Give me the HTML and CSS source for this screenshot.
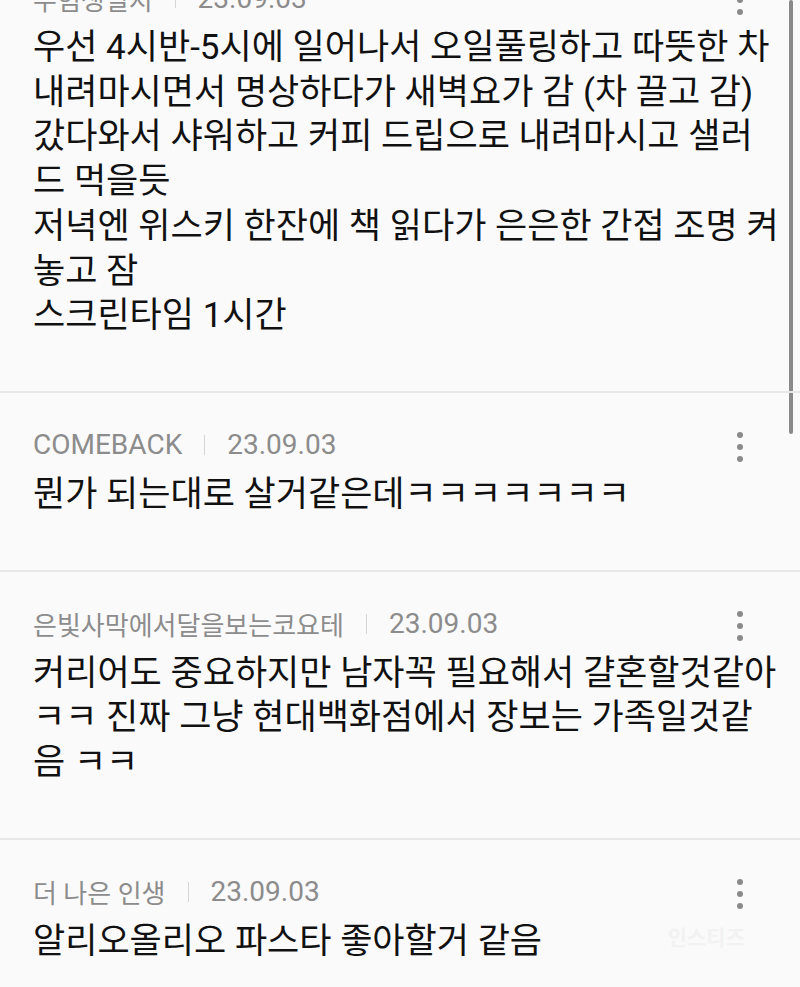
FILE: index.html
```html
<!DOCTYPE html>
<html lang="ko">
<head>
  <meta charset="UTF-8" />
  <meta name="viewport" content="width=device-width, initial-scale=1" />
  <title>댓글</title>
  <link rel="stylesheet" href="styles.css">
</head>
<body>

  <div class="scrollbar"></div>

  <ul class="comments">
    <li class="comment first">
      <div class="meta">
        <span class="name ko">수험생일지</span>
        <span class="sep"></span>
        <span class="date">23.09.03</span>
        <span class="more"><i></i><i></i><i></i></span>
      </div>
      <p class="body">우선 4시반-5시에 일어나서 오일풀링하고 따뜻한 차<br>내려마시면서 명상하다가 새벽요가 감 (차 끌고 감)<br>갔다와서 샤워하고 커피 드립으로 내려마시고 샐러<br>드 먹을듯<br>저녁엔 위스키 한잔에 책 읽다가 은은한 간접 조명 켜<br>놓고 잠<br>스크린타임 1시간</p>
    </li>
    <li class="comment">
      <div class="meta">
        <span class="name">COMEBACK</span>
        <span class="sep"></span>
        <span class="date">23.09.03</span>
        <span class="more"><i></i><i></i><i></i></span>
      </div>
      <p class="body">뭔가 되는대로 살거같은데ㅋㅋㅋㅋㅋㅋㅋ</p>
    </li>
    <li class="comment">
      <div class="meta">
        <span class="name ko">은빛사막에서달을보는코요테</span>
        <span class="sep"></span>
        <span class="date">23.09.03</span>
        <span class="more"><i></i><i></i><i></i></span>
      </div>
      <p class="body">커리어도 중요하지만 남자꼭 필요해서 걀혼할것같아<br>ㅋㅋ 진짜 그냥 현대백화점에서 장보는 가족일것같<br>음 ㅋㅋ</p>
    </li>
    <li class="comment">
      <div class="meta">
        <span class="name ko">더 나은 인생</span>
        <span class="sep"></span>
        <span class="date">23.09.03</span>
        <span class="more"><i></i><i></i><i></i></span>
      </div>
      <p class="body">알리오올리오 파스타 좋아할거 같음</p>
      <span class="mark">인스티즈</span>
    </li>
  </ul>

</body>
</html>
```

FILE: styles.css
```css
body {
  margin: 0;
  background: #fafafa;
  font-family: Roboto, "Noto Sans CJK KR", sans-serif;
  color: #111;
  overflow: hidden;
}

.scrollbar {
  position: absolute;
  top: 0;
  right: 7px;
  width: 4px;
  height: 434px;
  border-radius: 2px;
  background: #8a8a8a;
}

.comments {
  list-style: none;
  margin: 0;
  padding: 0;
}

.comment {
  position: relative;
  padding: 34px 33px 52px;
  border-bottom: 2px solid #e8e8e8;
}

.comment.first {
  margin-top: -54px;
}

.meta {
  display: flex;
  align-items: center;
  height: 36px;
  font-size: 28px;
  color: #8c8c8c;
}

.name.ko {
  font-size: 26px;
}

.sep {
  width: 1px;
  height: 20px;
  margin: 0 22px;
  background: #d6d6d6;
}

.more {
  margin-left: auto;
  margin-right: 24px;
  padding-top: 4px;
  display: flex;
  flex-direction: column;
  gap: 6px;
}

.more i {
  width: 6px;
  height: 6px;
  border-radius: 50%;
  background: #8a8a8a;
}

.body {
  margin: 10px 0 0;
  font-size: 35px;
  line-height: 44.7px;
  white-space: nowrap;
}

.mark {
  position: absolute;
  top: 84px;
  right: 55px;
  font-size: 21px;
  line-height: 28px;
  font-weight: bold;
  color: #f2f2f2;
}
```
